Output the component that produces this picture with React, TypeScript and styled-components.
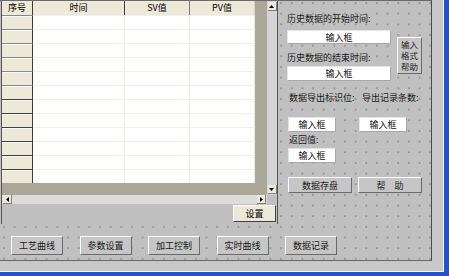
import styled, { createGlobalStyle } from 'styled-components';

const GlobalStyle = createGlobalStyle`
  html, body {
    margin: 0;
    padding: 0;
    background: #c8c8c8;
  }
  body {
    font-family: "Noto Sans CJK SC", "Liberation Sans", sans-serif;
    font-size: 9px;
    color: #111;
  }
`;

const COLUMNS = [
    { title: '时间', width: 92, line: '#3c3c3c' },
    { title: 'SV值', width: 65, line: '#7a7a7a' },
    { title: 'PV值', width: 65, line: '#d8d4c4' },
];

const ROWS = Array.from({ length: 12 }, (_, i) => i);

const BOTTOM_BUTTONS = ['工艺曲线', '参数设置', '加工控制', '实时曲线', '数据记录'];

export default function App() {
    return (
        <>
            <GlobalStyle />
            <Screen>
                <Desk>
                    <Form>
                        <TopSection>
                            <GridFrame>
                                <GridMain>
                                    <TableArea>
                                        <Table>
                                            <HeaderRow>
                                                <FixedHead>序号</FixedHead>
                                                {COLUMNS.map((c) => (
                                                    <HeadCell key={c.title} $w={c.width} $line={c.line}>
                                                        {c.title}
                                                    </HeadCell>
                                                ))}
                                            </HeaderRow>
                                            {ROWS.map((r) => (
                                                <BodyRow key={r}>
                                                    <FixedCell $dark={r > 5} />
                                                    {COLUMNS.map((c) => (
                                                        <DataCell key={c.title} $w={c.width} />
                                                    ))}
                                                </BodyRow>
                                            ))}
                                        </Table>
                                    </TableArea>
                                    <VScroll>
                                        <ScrollBtn>
                                            <Arrow viewBox="0 0 5 3"><path d="M0 3h5L2.5 0z" /></Arrow>
                                        </ScrollBtn>
                                        <ScrollBtn>
                                            <Arrow viewBox="0 0 5 3"><path d="M0 0h5L2.5 3z" /></Arrow>
                                        </ScrollBtn>
                                    </VScroll>
                                </GridMain>
                                <HScrollRow>
                                    <HScroll>
                                        <ScrollBtn>
                                            <Arrow viewBox="0 0 3 5"><path d="M3 0v5L0 2.5z" /></Arrow>
                                        </ScrollBtn>
                                        <ScrollBtn>
                                            <Arrow viewBox="0 0 3 5"><path d="M0 0v5L3 2.5z" /></Arrow>
                                        </ScrollBtn>
                                    </HScroll>
                                </HScrollRow>
                                <GridFooter>
                                    <BeigeButton>设置</BeigeButton>
                                </GridFooter>
                            </GridFrame>

                            <RightPanel>
                                <TimeSection>
                                    <Label $h={18} $lh={14}>历史数据的开始时间:</Label>
                                    <TextBox $w={104} $h={14}>输入框</TextBox>
                                    <Label $h={22} $lh={15} $pt={6}>历史数据的结束时间:</Label>
                                    <TextBox $w={104} $h={15}>输入框</TextBox>
                                    <HelpButton>
                                        <HelpLine>输入</HelpLine>
                                        <HelpLine>格式</HelpLine>
                                        <HelpLine>帮助</HelpLine>
                                    </HelpButton>
                                </TimeSection>
                                <ExportLabels>
                                    <span>数据导出标识位:</span>
                                    <span>导出记录条数:</span>
                                </ExportLabels>
                                <BoxRow>
                                    <TextBox $w={48} $h={15}>输入框</TextBox>
                                    <TextBox $w={48} $h={15}>输入框</TextBox>
                                </BoxRow>
                                <Label $h={15} $lh={15} $pl={2}>返回值:</Label>
                                <BoxRow $mt={1}>
                                    <TextBox $w={48} $h={15}>输入框</TextBox>
                                </BoxRow>
                                <ActionRow>
                                    <FormButton $w={64} $h={16}>数据存盘</FormButton>
                                    <FormButton $w={64} $h={16}>帮　助</FormButton>
                                </ActionRow>
                            </RightPanel>
                        </TopSection>

                        <BottomBar>
                            {BOTTOM_BUTTONS.map((b) => (
                                <FormButton key={b} $w={52} $h={19}>{b}</FormButton>
                            ))}
                        </BottomBar>
                    </Form>
                </Desk>
            </Screen>
        </>
    );
}

const Screen = styled.div`
  width: 449px;
  height: 276px;
  box-sizing: border-box;
  display: flex;
  background: #c8c8c8;
  border-right: 5px solid #2452cc;
  border-bottom: 4px solid #2452cc;
`;

const Desk = styled.div`
  flex: 1;
  display: flex;
  align-items: flex-start;
  border-right: 1px solid #f4f4f4;
  border-bottom: 1px solid #f4f4f4;
`;

const Form = styled.div`
  width: 432px;
  height: 261px;
  box-sizing: border-box;
  display: flex;
  flex-direction: column;
  background-color: #c0c0c0;
  background-image: radial-gradient(circle at 1px 1px, #8a8a8a 0.6px, transparent 0.9px);
  background-size: 10.67px 10.67px;
  background-position: 3px 1px;
  border-top: 1px solid #6a6a6a;
  border-right: 1px solid #4a4a4a;
  border-bottom: 1px solid #6a6a6a;
`;

const TopSection = styled.div`
  height: 223px;
  display: flex;
`;

const GridFrame = styled.div`
  width: 277px;
  margin-left: 1px;
  box-sizing: border-box;
  display: flex;
  flex-direction: column;
  background: #c0c0c0;
  border-left: 1px solid #555;
  border-right: 1px solid #555;
`;

const GridMain = styled.div`
  height: 194px;
  display: flex;
`;

const TableArea = styled.div`
  width: 265px;
  background: #aca899;
  overflow: hidden;
`;

const Table = styled.div`
  display: flex;
  flex-direction: column;
  width: 253px;
`;

const HeaderRow = styled.div`
  display: flex;
  height: 14px;
  background: #ece9d8;
`;

const FixedHead = styled.div`
  width: 31px;
  box-sizing: border-box;
  border-right: 1px solid #3c3c3c;
  text-align: center;
  line-height: 14px;
  color: #000;
`;

const HeadCell = styled.div<{ $w: number; $line: string }>`
  width: ${({ $w }) => $w}px;
  box-sizing: border-box;
  border-right: 1px solid ${({ $line }) => $line};
  text-align: center;
  line-height: 14px;
  color: #000;
`;

const BodyRow = styled.div`
  display: flex;
  height: 14px;
`;

const FixedCell = styled.div<{ $dark: boolean }>`
  width: 31px;
  box-sizing: border-box;
  background: #ece9d8;
  border-right: 1px solid #3c3c3c;
  border-top: 1px solid ${({ $dark }) => ($dark ? '#404040' : '#8a8a8a')};
  box-shadow: inset 0 1px 0 #fafafa;
`;

const DataCell = styled.div<{ $w: number }>`
  width: ${({ $w }) => $w}px;
  box-sizing: border-box;
  background: #fff;
  border-right: 1px solid #f0ede0;
  border-top: 1px solid #f2efe4;
`;

const VScroll = styled.div`
  width: 10px;
  display: flex;
  flex-direction: column;
  justify-content: space-between;
  align-items: center;
  padding: 1px 0 1px;
  background: #d4d4d4;
`;

const ScrollBtn = styled.div`
  width: 8px;
  height: 8px;
  display: flex;
  align-items: center;
  justify-content: center;
  background: #ece9d8;
  border-right: 1px solid #808080;
  border-bottom: 1px solid #808080;
`;

const Arrow = styled.svg`
  width: 5px;
  height: 5px;
  fill: #000;
`;

const HScrollRow = styled.div`
  height: 9px;
  display: flex;
`;

const HScroll = styled.div`
  width: 265px;
  display: flex;
  justify-content: space-between;
  align-items: center;
  padding: 0 1px;
  box-sizing: border-box;
  background: #dcdcdc;
`;

const GridFooter = styled.div`
  flex: 1;
  display: flex;
  justify-content: flex-end;
  align-items: flex-start;
  padding: 1px 1px 0 0;
`;

const BeigeButton = styled.div`
  width: 43px;
  height: 17px;
  box-sizing: border-box;
  display: flex;
  align-items: center;
  justify-content: center;
  background: #ece9d8;
  border: 1px solid;
  border-color: #fff #404040 #404040 #fff;
  color: #000;
`;

const RightPanel = styled.div`
  flex: 1;
  display: flex;
  flex-direction: column;
  align-items: flex-start;
  padding: 11px 0 0 9px;
`;

const TimeSection = styled.div`
  display: grid;
  grid-template-columns: 104px 25px;
  grid-template-rows: 18px 14px 22px 15px;
  column-gap: 6px;
  align-items: start;

  & > * {
    grid-column: 1;
  }
`;

const Label = styled.div<{ $h: number; $lh: number; $pt?: number; $pl?: number }>`
  height: ${({ $h }) => $h}px;
  box-sizing: border-box;
  padding-top: ${({ $pt }) => $pt ?? 0}px;
  padding-left: ${({ $pl }) => $pl ?? 0}px;
  line-height: ${({ $lh }) => $lh}px;
  white-space: nowrap;
  color: #1a1a1a;
`;

const TextBox = styled.div<{ $w: number; $h: number }>`
  width: ${({ $w }) => $w}px;
  height: ${({ $h }) => $h}px;
  box-sizing: border-box;
  display: flex;
  align-items: center;
  justify-content: center;
  background: #fff;
  border: 1px solid;
  border-color: #e4e4e4 #a8a8a8 #a8a8a8 #e4e4e4;
  color: #111;
`;

const HelpButton = styled.div`
  && {
    grid-column: 2;
    grid-row: 2 / span 3;
  }
  align-self: center;
  width: 25px;
  height: 37px;
  box-sizing: border-box;
  display: flex;
  flex-direction: column;
  align-items: center;
  justify-content: center;
  background: #c6c6c6;
  border: 1px solid;
  border-color: #fff #6a6a6a #6a6a6a #fff;
  color: #222;
`;

const HelpLine = styled.span`
  display: block;
  height: 11px;
  font-size: 8.5px;
  line-height: 11px;
  white-space: nowrap;
`;

const ExportLabels = styled.div`
  display: grid;
  grid-template-columns: 73px auto;
  height: 19px;
  margin-top: 7px;
  padding-left: 2px;
  line-height: 19px;
  white-space: nowrap;
  color: #1a1a1a;
`;

const BoxRow = styled.div<{ $mt?: number }>`
  display: flex;
  gap: 23px;
  margin-top: ${({ $mt }) => $mt ?? 10}px;
  margin-left: 1px;
`;

const ActionRow = styled.div`
  display: flex;
  gap: 6px;
  margin-top: 14px;
  margin-left: 1px;
`;

const FormButton = styled.div<{ $w: number; $h: number }>`
  width: ${({ $w }) => $w}px;
  height: ${({ $h }) => $h}px;
  box-sizing: border-box;
  display: flex;
  align-items: center;
  justify-content: center;
  background: #c6c6c6;
  border: 1px solid;
  border-color: #fff #6a6a6a #6a6a6a #fff;
  color: #1a1a1a;
  white-space: nowrap;
`;

const BottomBar = styled.div`
  flex: 1;
  display: flex;
  align-items: flex-start;
  gap: 16.5px;
  padding: 12px 0 0 11px;
`;
